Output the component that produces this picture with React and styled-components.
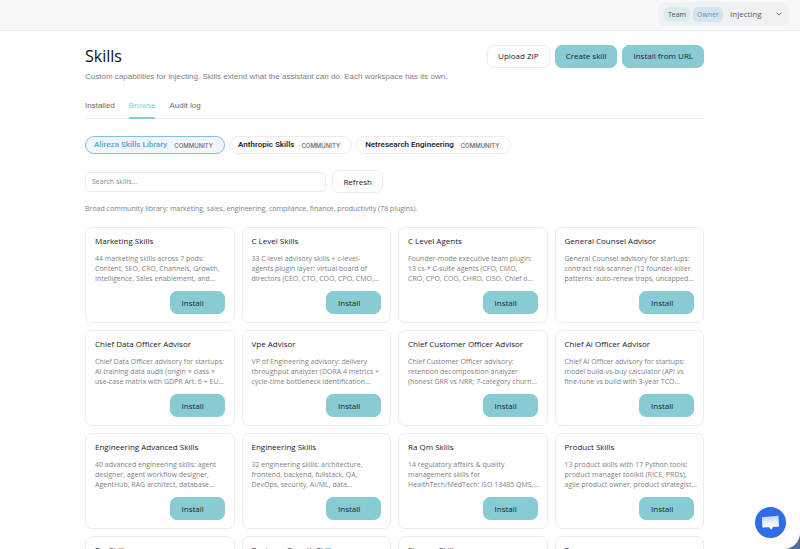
import React, { useState } from "react";
import styled, { createGlobalStyle, css } from "styled-components";

const TEAL = "#88cbd2";
const INK = "#16222a";
const MUTED = "#7d8287";
const LINE = "#e9ebed";
const TEXT = '"Liberation Sans", Arial, sans-serif';
const LABEL = '"Roboto", "Liberation Sans", sans-serif';
const COPY = '"Open Sans", "Noto Sans", sans-serif';

const GlobalStyle = createGlobalStyle`
  *, *::before, *::after { box-sizing: border-box; }
  body { margin: 0; background: #4f6f96; font-family: ${TEXT}; font-size: 8px; color: ${INK}; }
  h1, h2, p { margin: 0; }
  button, input, select { font: inherit; color: inherit; }
`;

const Page = styled.div`
  height: 100vh;
  overflow: hidden;
  background: #fff;
  border-bottom-right-radius: 16px;
`;

const TopBar = styled.header`
  display: flex;
  justify-content: flex-end;
  align-items: flex-start;
  height: 31px;
  padding: 2px 11px 0 0;
  background: #f6f8fb;
  border-bottom: 1px solid #e8ecf0;
`;

const Workspace = styled.div`
  display: flex;
  align-items: center;
  gap: 3px;
  height: 24px;
  padding: 0 7px 0 6px;
  border-radius: 7px;
  background: #f0f1f3;
`;

const Chip = styled.span`
  padding: 0 4px;
  border-radius: 5px;
  font: 500 7px/15px ${COPY};
  color: ${(p) => (p.$owner ? "#6693ad" : "#3c5358")};
  background: ${(p) => (p.$owner ? "#d3e5ee" : "#dcebee")};
`;

const Picker = styled.label`
  display: flex;
  align-items: center;
  padding-left: 4px;
  color: #55595e;
`;

const PickerSelect = styled.select`
  appearance: none;
  width: 46px;
  padding: 0;
  border: 0;
  background: transparent;
  font: 400 8px/14px ${COPY};
`;

const Shell = styled.div`
  padding-right: 11px;
`;

const Content = styled.main`
  max-width: 641px;
  margin: 0 auto;
  padding: 13px 11px 0;
`;

const Heading = styled.div`
  display: flex;
  justify-content: space-between;
  align-items: center;
`;

const Title = styled.h1`
  font: 500 16px/24px ${COPY};
  color: #0c0f12;
`;

const Actions = styled.div`
  display: flex;
  gap: 5px;
`;

const Button = styled.button`
  height: 23px;
  padding: 0 10px;
  border: 1px solid ${(p) => (p.$primary ? TEAL : LINE)};
  border-radius: 7px;
  background: ${(p) => (p.$primary ? TEAL : "#fff")};
  font: 500 8px/12px ${COPY};
  color: ${INK};
  white-space: nowrap;
`;

const Intro = styled.p`
  margin-top: 3px;
  line-height: 12px;
  color: ${MUTED};
`;

const Tabs = styled.nav`
  display: flex;
  gap: 14px;
  margin-top: 17px;
  border-bottom: 1px solid ${LINE};
`;

const Tab = styled.a`
  padding: 0 0 5px;
  margin-bottom: -1px;
  border-bottom: 2px solid ${(p) => (p.$active ? TEAL : "transparent")};
  line-height: 12px;
  color: ${(p) => (p.$active ? TEAL : "#666b70")};
  text-decoration: none;
`;

const Sources = styled.div`
  display: flex;
  gap: 4px;
  margin-top: 17px;
`;

const Source = styled.button`
  display: flex;
  align-items: center;
  gap: 4px;
  height: 18px;
  padding: 0 8px;
  border: 1px solid ${LINE};
  border-radius: 9px;
  background: #fff;
  font: 600 8px/12px ${LABEL};
  color: #25282c;
  ${(p) =>
    p.$active &&
    css`
      border-color: #83bfdf;
      background: #eff5fd;
      color: #5badd6;
    `}
`;

const Badge = styled.span`
  padding: 0 3px;
  border-radius: 3px;
  background: #f7f8f9;
  font: 500 6px/9px "Inter", sans-serif;
  color: #64696f;
`;

const SearchRow = styled.div`
  display: flex;
  align-items: center;
  gap: 6px;
  margin-top: 16px;
`;

const Search = styled.input`
  width: 39%;
  height: 20px;
  padding: 0 6px;
  border: 1px solid ${LINE};
  border-radius: 5px;
  font: 400 7px/12px ${COPY};
  &::placeholder { color: #85898e; opacity: 1; }
`;

const Summary = styled.p`
  margin-top: 11px;
  font: 400 7px/10px ${COPY};
  color: ${MUTED};
`;

const Grid = styled.section`
  display: grid;
  grid-template-columns: repeat(4, minmax(0, 1fr));
  gap: 7px;
  margin-top: 13px;
`;

const Card = styled.article`
  display: flex;
  flex-direction: column;
  padding: 7px 9px 8px;
  border: 1px solid ${LINE};
  border-radius: 7px;
  background: #fff;
`;

const CardTitle = styled.h2`
  font: 500 8px/12px ${COPY};
  color: ${INK};
  white-space: nowrap;
`;

const CardText = styled.p`
  margin: 7px 0;
  min-height: 30px;
  font: 400 7px/10px ${COPY};
  color: ${MUTED};
  white-space: pre;
`;

const InstallButton = styled(Button)`
  align-self: flex-end;
  width: 55px;
  padding: 0 11px;
  text-align: left;
`;

const ChatButton = styled.button`
  position: fixed;
  right: 14px;
  bottom: 11px;
  display: grid;
  place-items: center;
  width: 31px;
  height: 31px;
  padding: 0;
  border: 0;
  border-radius: 50%;
  background: #2f6ce8;
`;

const SOURCES = ["Alireza Skills Library", "Anthropic Skills", "Netresearch Engineering"];

const SKILLS = [
  ["Marketing Skills", "44 marketing skills across 7 pods:\nContent, SEO, CRO, Channels, Growth,\nIntelligence, Sales enablement, and…"],
  ["C Level Skills", "33 C-level advisory skills + c-level-\nagents plugin layer: virtual board of\ndirectors (CEO, CTO, COO, CPO, CMO,…"],
  ["C Level Agents", "Founder-mode executive team plugin:\n13 cs-* C-suite agents (CFO, CMO,\nCRO, CPO, COO, CHRO, CISO, Chief o…"],
  ["General Counsel Advisor", "General Counsel advisory for startups:\ncontract risk scanner (12 founder-killer\npatterns: auto-renew traps, uncapped…"],
  ["Chief Data Officer Advisor", "Chief Data Officer advisory for startups:\nAI training data audit (origin × class ×\nuse-case matrix with GDPR Art. 6 + EU…"],
  ["Vpe Advisor", "VP of Engineering advisory: delivery\nthroughput analyzer (DORA 4 metrics +\ncycle-time bottleneck identification…"],
  ["Chief Customer Officer Advisor", "Chief Customer Officer advisory:\nretention decomposition analyzer\n(honest GRR vs NRR; 7-category churn…"],
  ["Chief Ai Officer Advisor", "Chief AI Officer advisory for startups:\nmodel build-vs-buy calculator (API vs\nfine-tune vs build with 3-year TCO…"],
  ["Engineering Advanced Skills", "40 advanced engineering skills: agent\ndesigner, agent workflow designer,\nAgentHub, RAG architect, database…"],
  ["Engineering Skills", "32 engineering skills: architecture,\nfrontend, backend, fullstack, QA,\nDevOps, security, AI/ML, data…"],
  ["Ra Qm Skills", "14 regulatory affairs & quality\nmanagement skills for\nHealthTech/MedTech: ISO 13485 QMS,…"],
  ["Product Skills", "13 product skills with 17 Python tools:\nproduct manager toolkit (RICE, PRDs),\nagile product owner, product strategist…"],
  ["Pm Skills", ""],
  ["Business Growth Skills", ""],
  ["Finance Skills", ""],
  ["Pw", ""],
];

function Chevron() {
  return (
    <svg width="6" height="4" viewBox="0 0 6 4" fill="none" stroke="#6b7075" strokeWidth="0.8" strokeLinecap="round" strokeLinejoin="round" aria-hidden="true">
      <path d="M0.8 0.8 3 3 5.2 0.8" />
    </svg>
  );
}

function ChatIcon() {
  return (
    <svg width="19" height="17" viewBox="0 0 19 17" aria-hidden="true">
      <defs>
        <linearGradient id="bubble" x1="0" y1="0" x2="0" y2="1">
          <stop offset="0" stopColor="#c3d5fa" />
          <stop offset="0.75" stopColor="#ffffff" />
        </linearGradient>
      </defs>
      <path d="M1.4 3.3 17 1.8Q17.5 1.8 17.5 2.3L18 12.2Q18 12.7 17.5 12.7L12.2 12.8 10.3 15.8 8 13.2 2 13.5Q1.5 13.5 1.4 13L.9 3.9Q.9 3.4 1.4 3.3Z" fill="url(#bubble)" />
    </svg>
  );
}

export default function App() {
  const [source, setSource] = useState(SOURCES[0]);
  return (
    <>
      <GlobalStyle />
      <Page>
        <TopBar>
          <Workspace>
            <Chip>Team</Chip>
            <Chip $owner>Owner</Chip>
            <Picker>
              <PickerSelect aria-label="Workspace" defaultValue="Injecting">
                <option>Injecting</option>
              </PickerSelect>
              <Chevron />
            </Picker>
          </Workspace>
        </TopBar>
        <Shell>
          <Content>
            <Heading>
              <Title>Skills</Title>
              <Actions>
                <Button type="button">Upload ZIP</Button>
                <Button type="button" $primary>Create skill</Button>
                <Button type="button" $primary>Install from URL</Button>
              </Actions>
            </Heading>
            <Intro>Custom capabilities for Injecting. Skills extend what the assistant can do. Each workspace has its own.</Intro>
            <Tabs>
              <Tab href="#installed">Installed</Tab>
              <Tab href="#browse" $active aria-current="page">Browse</Tab>
              <Tab href="#audit">Audit log</Tab>
            </Tabs>
            <Sources>
              {SOURCES.map((name) => (
                <Source key={name} type="button" $active={name === source} onClick={() => setSource(name)}>
                  {name}
                  <Badge>COMMUNITY</Badge>
                </Source>
              ))}
            </Sources>
            <SearchRow>
              <Search type="text" aria-label="Search skills" placeholder="Search skills…" />
              <Button type="button">Refresh</Button>
            </SearchRow>
            <Summary>Broad community library: marketing, sales, engineering, compliance, finance, productivity (78 plugins).</Summary>
            <Grid>
              {SKILLS.map(([name, text]) => (
                <Card key={name}>
                  <CardTitle>{name}</CardTitle>
                  <CardText>{text}</CardText>
                  <InstallButton type="button" $primary>Install</InstallButton>
                </Card>
              ))}
            </Grid>
          </Content>
        </Shell>
        <ChatButton type="button" aria-label="Open chat">
          <ChatIcon />
        </ChatButton>
      </Page>
    </>
  );
}
